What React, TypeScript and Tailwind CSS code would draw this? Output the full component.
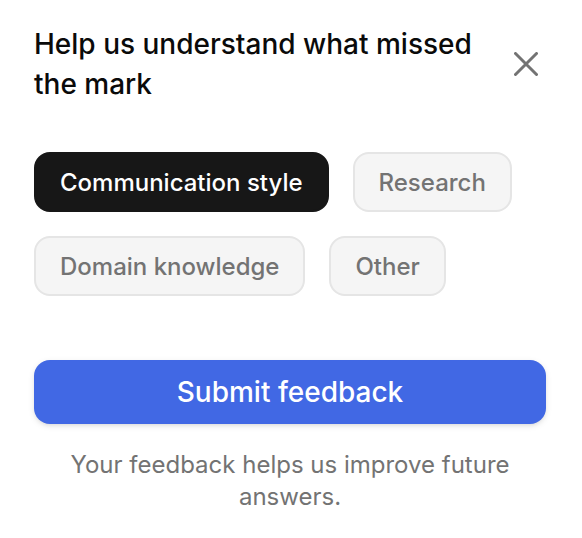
import React, { useState } from "react";

const reasons = ["Communication style", "Research", "Domain knowledge", "Other"];

export default function App() {
  const [selected, setSelected] = useState(reasons[0]);

  return (
    <main className="min-h-screen bg-white py-6 pr-9 pl-[34px] font-['Inter',sans-serif] text-[#0a0a0a]">
      <header className="flex items-center justify-between gap-6">
        <h1 className="text-[28px] leading-10 font-medium">Help us understand what missed the mark</h1>
        <button type="button" aria-label="Close" className="flex size-10 shrink-0 items-center justify-center text-[#737373]">
          <svg viewBox="0 0 24 24" className="size-6" fill="none" stroke="currentColor" strokeWidth="3" strokeLinecap="round" aria-hidden="true">
            <path d="M1.5 1.5L22.5 22.5M22.5 1.5L1.5 22.5" />
          </svg>
        </button>
      </header>
      <div className="mt-12 flex flex-wrap gap-6">
        {reasons.map((reason) => (
          <button
            key={reason}
            type="button"
            aria-pressed={selected === reason}
            onClick={() => setSelected(reason)}
            className={
              selected === reason
                ? "h-[60px] rounded-2xl border-2 border-[#171717] bg-[#171717] px-6 pt-0.5 text-2xl font-medium text-white"
                : "h-[60px] rounded-2xl border-2 border-[#e5e5e5] bg-[#f5f5f5] px-6 pt-0.5 text-2xl font-medium text-[#737373]"
            }
          >
            {reason}
          </button>
        ))}
      </div>
      <button type="button" className="mt-16 h-16 w-full rounded-2xl bg-[#4168e4] text-[28px] font-medium text-white shadow-[0_2px_6px_rgba(0,0,0,0.1),0_2px_4px_-2px_rgba(0,0,0,0.1)]">
        Submit feedback
      </button>
      <p className="mt-[25px] px-6 text-center text-2xl leading-8 text-[#737373]">Your feedback helps us improve future answers.</p>
    </main>
  );
}
